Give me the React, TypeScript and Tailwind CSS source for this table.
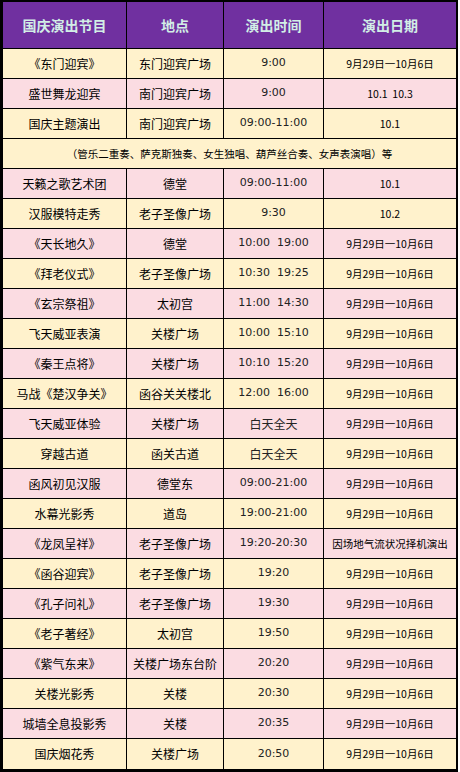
import { Fragment } from "react";

type Row = {
  name: string;
  place: string;
  time: string;
  date: string;
  pink: boolean;
};

const range = "9月29日一10月6日";

const before: Row[] = [
  { name: "《东门迎宾》", place: "东门迎宾广场", time: "9:00", date: range, pink: false },
  { name: "盛世舞龙迎宾", place: "南门迎宾广场", time: "9:00", date: "10.1  10.3", pink: true },
  { name: "国庆主题演出", place: "南门迎宾广场", time: "09:00-11:00", date: "10.1", pink: false },
];

const after: Row[] = [
  { name: "天籁之歌艺术团", place: "德堂", time: "09:00-11:00", date: "10.1", pink: true },
  { name: "汉服模特走秀", place: "老子圣像广场", time: "9:30", date: "10.2", pink: false },
  { name: "《天长地久》", place: "德堂", time: "10:00  19:00", date: range, pink: true },
  { name: "《拜老仪式》", place: "老子圣像广场", time: "10:30  19:25", date: range, pink: false },
  { name: "《玄宗祭祖》", place: "太初宫", time: "11:00  14:30", date: range, pink: true },
  { name: "飞天威亚表演", place: "关楼广场", time: "10:00  15:10", date: range, pink: false },
  { name: "《秦王点将》", place: "关楼广场", time: "10:10  15:20", date: range, pink: true },
  { name: "马战《楚汉争关》", place: "函谷关关楼北", time: "12:00  16:00", date: range, pink: false },
  { name: "飞天威亚体验", place: "关楼广场", time: "白天全天", date: range, pink: true },
  { name: "穿越古道", place: "函关古道", time: "白天全天", date: range, pink: false },
  { name: "函风初见汉服", place: "德堂东", time: "09:00-21:00", date: range, pink: true },
  { name: "水幕光影秀", place: "道岛", time: "19:00-21:00", date: range, pink: false },
  { name: "《龙凤呈祥》", place: "老子圣像广场", time: "19:20-20:30", date: "因场地气流状况择机演出", pink: true },
  { name: "《函谷迎宾》", place: "老子圣像广场", time: "19:20", date: range, pink: false },
  { name: "《孔子问礼》", place: "老子圣像广场", time: "19:30", date: range, pink: true },
  { name: "《老子著经》", place: "太初宫", time: "19:50", date: range, pink: false },
  { name: "《紫气东来》", place: "关楼广场东台阶", time: "20:20", date: range, pink: true },
  { name: "关楼光影秀", place: "关楼", time: "20:30", date: range, pink: false },
  { name: "城墙全息投影秀", place: "关楼", time: "20:35", date: range, pink: true },
  { name: "国庆烟花秀", place: "关楼广场", time: "20:50", date: range, pink: false },
];

const cols = "grid grid-cols-[123px_1px_96px_1px_99px_1px_132px]";
const cjk = "font-['Noto_Sans_CJK_SC',sans-serif]";

const hasCjk = (s: string) => /[\u4e00-\u9fff]/.test(s);

function Line() {
  return <div className="bg-black" />;
}

function ScheduleRow({ row, last }: { row: Row; last: boolean }) {
  return (
    <div
      className={`${cols} h-[30px] ${last ? "" : "border-b border-black"} ${
        row.pink ? "bg-[#fbdce2]" : "bg-[#fff2cc]"
      }`}
    >
      <div className={`flex items-center justify-center text-[12px] text-black ${cjk}`}>{row.name}</div>
      <Line />
      <div className={`flex items-center justify-center text-[12px] text-black ${cjk}`}>{row.place}</div>
      <Line />
      <div
        className={`flex items-center justify-center whitespace-pre text-[#222] ${
          hasCjk(row.time) ? `text-[12px] ${cjk}` : "text-[11px] font-['DejaVu_Sans',sans-serif]"
        }`}
      >
        {row.time}
      </div>
      <Line />
      <div className={`flex items-center justify-center whitespace-pre text-[10.5px] text-black ${cjk}`}>
        {row.date}
      </div>
    </div>
  );
}

export default function App() {
  const headers = ["国庆演出节目", "地点", "演出时间", "演出日期"];
  return (
    <div className="w-[460px] h-[772px] bg-white">
      <div className="w-[458px] border-l-[3px] border-t-2 border-r-2 border-b-[3px] border-black">
        <div className={`${cols} h-[47px] bg-[#7030a0] border-b border-black`}>
          {headers.map((h, i) => (
            <Fragment key={h}>
              {i > 0 && <Line />}
              <div
                className={`flex items-center justify-center text-[14px] font-bold text-[#d2eee6] ${cjk}`}
              >
                {h}
              </div>
            </Fragment>
          ))}
        </div>
        {before.map((r) => (
          <ScheduleRow key={r.name} row={r} last={false} />
        ))}
        <div
          className={`h-[30px] flex items-center justify-center bg-[#fff2cc] border-b border-black text-[10.5px] text-black ${cjk}`}
        >
          （管乐二重奏、萨克斯独奏、女生独唱、葫芦丝合奏、女声表演唱）等
        </div>
        {after.map((r, i) => (
          <ScheduleRow key={r.name} row={r} last={i === after.length - 1} />
        ))}
      </div>
    </div>
  );
}
